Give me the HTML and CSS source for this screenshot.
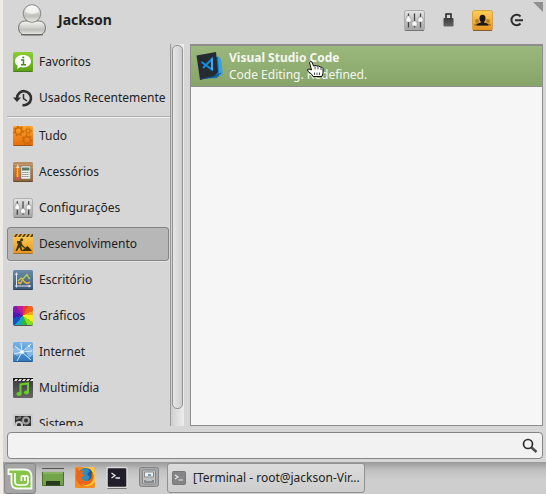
FILE: index.html
```html
<!DOCTYPE html>
<html lang="pt-BR">
<head>
<meta charset="utf-8">
<title>Menu</title>
<link rel="stylesheet" href="styles.css">
</head>
<body>
<svg class="defs" aria-hidden="true">
  <defs>
    <linearGradient id="silver" x1="0" y1="0" x2="0" y2="1"><stop offset="0" stop-color="#e4e4e4"/><stop offset="1" stop-color="#a4a4a4"/></linearGradient>
    <linearGradient id="body" x1="0" y1="0" x2="0" y2="1"><stop offset="0" stop-color="#f7f7f4"/><stop offset=".65" stop-color="#bfc0ba"/><stop offset="1" stop-color="#eeeeeb"/></linearGradient>
    <linearGradient id="green" x1="0" y1="0" x2="0" y2="1"><stop offset="0" stop-color="#8ad02f"/><stop offset="1" stop-color="#5b9f18"/></linearGradient>
    <linearGradient id="orange" x1="0" y1="0" x2="0" y2="1"><stop offset="0" stop-color="#ffa32b"/><stop offset="1" stop-color="#e66b0b"/></linearGradient>
    <linearGradient id="gold" x1="0" y1="0" x2="0" y2="1"><stop offset="0" stop-color="#fccf57"/><stop offset="1" stop-color="#e59322"/></linearGradient>
    <linearGradient id="wood" x1="0" y1="0" x2="0" y2="1"><stop offset="0" stop-color="#ba8f62"/><stop offset="1" stop-color="#8c6540"/></linearGradient>
    <linearGradient id="steel" x1="0" y1="0" x2="0" y2="1"><stop offset="0" stop-color="#6b8aaa"/><stop offset="1" stop-color="#3c5775"/></linearGradient>
    <linearGradient id="sky" x1="0" y1="0" x2="0" y2="1"><stop offset="0" stop-color="#7cb6e8"/><stop offset="1" stop-color="#2b74bd"/></linearGradient>
    <linearGradient id="coal" x1="0" y1="0" x2="0" y2="1"><stop offset="0" stop-color="#3a3a3a"/><stop offset="1" stop-color="#666"/></linearGradient>
    <symbol id="sliders" viewBox="0 0 21 21">
      <rect x=".5" y=".5" width="20" height="20" rx="2" fill="url(#silver)" stroke="#aaa"/><path d="M1 20.500h19" stroke="#777"/>
      <path d="M4.500 3.500v14M10.500 3.500v14M16.500 3.500v14" stroke="#444" stroke-width="1.300"/>
      <path d="M3 6h3v2h1v4H2V8h1zM9 11h3v1h1v4H8v-4h1zM15 7h3v1h1v4h-5V8h1z" fill="#fafafa" stroke="#888" stroke-width=".5"/>
    </symbol>
  </defs>
</svg>
<main class="menu">
  <header class="top">
    <svg class="avatar" viewBox="0 0 28 32" aria-hidden="true">
      <rect x=".7" y="17" width="26.600" height="13.800" rx="6" fill="url(#body)" stroke="#6d6d6b"/>
      <path d="M3 30.800h22" stroke="#555"/>
      <circle cx="14" cy="9.500" r="8.800" fill="url(#body)" stroke="#858582"/>
      <path d="M7.500 8a6.500 6.500 0 0 1 13 0q-6 4-13 0" fill="#fff" opacity=".65"/>
    </svg>
    <h1 class="user">Jackson</h1>
    <nav class="session" aria-label="Sessão">
      <button class="tool" aria-label="Configurações do sistema"><svg class="icon-lg" viewBox="0 0 21 21"><use href="#sliders"/></svg></button>
      <button class="tool" aria-label="Bloquear tela"><svg class="icon-lg" viewBox="0 0 21 21"><path d="M8 9V4h5v5" fill="none" stroke="#222" stroke-width="1.500"/><rect x="5.500" y="8" width="10" height="8.500" rx="1" fill="url(#coal)"/></svg></button>
      <button class="tool" aria-label="Trocar usuário"><svg class="icon-lg" viewBox="0 0 21 21"><rect x=".5" y=".5" width="20" height="20" rx="2" fill="url(#gold)" stroke="#d8a24a"/><path d="M1 20.500h19" stroke="#80602c"/><circle cx="5" cy="11" r="2" fill="#b87f26"/><circle cx="16" cy="11" r="2" fill="#b87f26"/><path d="M2 15.500q0-2 3-2h11q3 0 3 2z" fill="#a26d20"/><ellipse cx="10.500" cy="8.500" rx="3" ry="3.700" fill="#171717"/><path d="M4.500 15.500q0-2 4.500-3v-2h3v2q4.500 1 4.500 3z" fill="#171717"/></svg></button>
      <button class="tool" aria-label="Sair"><svg class="icon-lg" viewBox="0 0 21 21"><path d="M14.500 6.500A5.200 5.200 0 1 0 14.500 13.500M9 10.200h8" fill="none" stroke="#2f2f2f" stroke-width="2"/></svg></button>
    </nav>
    <span class="corner"></span>
  </header>

  <section class="panes">
    <nav class="categories" aria-label="Categorias">
      <button class="item"><svg class="icon" viewBox="0 0 20 20"><rect width="20" height="20" rx="1.500" fill="url(#green)"/><path d="M.5 19.500h19" stroke="#487d1d"/><path d="M10 3c4.700 0 8 2.700 8 6.200s-3.300 6.200-8 6.200q-1.500 0-2.700-.4L4 17l.8-3.200C3 12.700 2 11 2 9.200 2 5.700 5.300 3 10 3z" fill="#fff"/><path d="M8 8h2.500v4.500M8 12.700h5" fill="none" stroke="#4b8c16" stroke-width="1.500"/><circle cx="10.300" cy="5.500" r="1.100" fill="#4b8c16"/></svg><span>Favoritos</span></button>
      <button class="item"><svg class="icon" viewBox="0 0 20 20"><path d="M4 10a7 7 0 1 1 5.500 7" fill="none" stroke="#303030" stroke-width="2.600"/><path d="M0 9.500h8l-4 4.500z" fill="#303030"/><path d="M10.500 6V10.500l3.500 2.500" fill="none" stroke="#303030" stroke-width="1.500"/></svg><span>Usados Recentemente</span></button>
      <hr class="rule">
      <button class="item"><svg class="icon" viewBox="0 0 20 20"><rect width="20" height="20" rx="1.500" fill="url(#orange)"/><g fill="none" stroke="#c96a0d"><circle cx="5.500" cy="5" r="3.300" stroke-width="1.500"/><circle cx="5.500" cy="5" r="4.700" stroke-width="1.500" stroke-dasharray="2 2"/><circle cx="14" cy="14" r="3.300" stroke-width="1.500"/><circle cx="14" cy="14" r="4.700" stroke-width="1.500" stroke-dasharray="2 2"/><circle cx="15" cy="5" r="2"/><circle cx="15" cy="5" r="3.200" stroke-dasharray="1.500 1.500"/></g><path d="M.5 19.500h19" stroke="#a45317"/></svg><span>Tudo</span></button>
      <button class="item"><svg class="icon" viewBox="0 0 20 20"><rect width="20" height="20" rx="1.500" fill="url(#wood)"/><path d="M.5 19.500h19" stroke="#684a2b"/><path d="M0 2.500h20M0 5.500h20" stroke="#cca77e" stroke-width=".5"/><path d="M3 6l1.700-4L6.500 6z" fill="#f3d6a4"/><path d="M3 6h3.500v9H3z" fill="#ee7e17"/><path d="M4 6h1v9H4z" fill="#ffbd4a"/><path d="M3 15h3.500v2.800H3z" fill="#d95757"/><rect x="8" y="4" width="9.500" height="13" rx="1" fill="#f0f0ed" stroke="#85705b" stroke-width=".5"/><path d="M9 5.500h7.500v3H9z" fill="#547a67"/><g stroke="#777" stroke-dasharray="1.300 .8"><path d="M9.300 10.500h7M9.300 12.500h7M9.300 14.500h7"/></g></svg><span>Acessórios</span></button>
      <button class="item"><svg class="icon" viewBox="0 0 20 20"><use href="#sliders"/></svg><span>Configurações</span></button>
      <button class="item selected" aria-current="true"><svg class="icon" viewBox="0 0 20 20"><rect width="20" height="20" rx="1.500" fill="url(#gold)"/><path d="M0 .5h20v2H0z" fill="#e8ae35"/><path d="M1 3l2-3h2L3 3zM5 3l2-3h2L7 3zM9 3l2-3h2l-2 3zM13 3l2-3h2l-2 3zM17 3l2-3h1v2l-.7 1z" fill="#493b17"/><circle cx="8.700" cy="5.700" r="1.500" fill="#3e3210"/><path d="M4 7.500l4-1 1.500 4.500 2 2-1 .7-2.500-2.200 1.500 5.500H8l-1.500-4L4 17H2.500l2.300-6 .7-2.700-1.500 2z" fill="#3e3210"/><path d="M8.500 17l4-3.500 1.800-1.500 2 1.800L19 17z" fill="#3e3210"/><path d="M4 7l8 7" stroke="#3e3210"/><path d="M.5 19.500h19" stroke="#9d752b"/></svg><span>Desenvolvimento</span></button>
      <button class="item"><svg class="icon" viewBox="0 0 20 20"><rect width="20" height="20" rx="1.500" fill="url(#steel)"/><path d="M3.500 17.500V3M2 16h15" stroke="#dce5ef"/><path d="M2 5l1.500-3L5 5zM15.500 14.500l3 1.500-3 1.500z" fill="#dce5ef"/><path d="M5 11l3-3 2 1 4-4.500 1.500 3L17 9" fill="none" stroke="#aad34a" stroke-width="1.400"/><path d="M5 12.500l2.500 1 2-4 2.500 3 2 1 3-1.500" fill="none" stroke="#edb52f" stroke-width="1.400"/><path d="M.5 19.500h19" stroke="#2d435c"/></svg><span>Escritório</span></button>
      <button class="item"><span class="icon wheel"></span><span>Gráficos</span></button>
      <button class="item"><svg class="icon" viewBox="0 0 20 20"><rect width="20" height="20" rx="1.500" fill="url(#sky)"/><path d="M0 6l4-1 5 3-1 4-4 2-4-3zM12 7l5-2 3 2v6l-4 3-2-4z" fill="#b2d7f5" opacity=".55"/><path d="M2 4l7 6 9-8M9 10l-5 9M9 10l9 8M9 10l-1-9M9 10l10-1M1 12l8-2" fill="none" stroke="#e8f5ff" stroke-width=".9"/><circle cx="9" cy="10" r="1.800" fill="#fff"/><circle cx="16" cy="4" r="1" fill="#fff"/><path d="M.5 19.500h19" stroke="#285b8e"/></svg><span>Internet</span></button>
      <button class="item"><svg class="icon" viewBox="0 0 20 20"><rect width="20" height="20" rx="1.500" fill="url(#coal)"/><path d="M0 0h20v3H0z" fill="#171717"/><path d="M1 3l1.500-2H5L3.500 3zM5 3l1.500-2H9L7.500 3zM9 3l1.500-2H13L11.500 3zM13 3l1.500-2H17L15.500 3zM17 3l1.500-2H20v2z" fill="#eee"/><path d="M7.500 16V6.500l7.500-1V14" fill="none" stroke="#67ce29" stroke-width="2"/><ellipse cx="6" cy="16" rx="2.600" ry="2" fill="#67ce29"/><ellipse cx="13.500" cy="14.500" rx="2.600" ry="2" fill="#67ce29"/></svg><span>Multimídia</span></button>
      <button class="item"><svg class="icon" viewBox="0 0 20 20"><rect width="20" height="20" rx="1.500" fill="#cacaca"/><rect x="2" y="2" width="16" height="17" fill="#303030"/><circle cx="13" cy="6.500" r="3" fill="none" stroke="#a3a3a3" stroke-width="2"/><circle cx="13" cy="6.500" r="4" fill="none" stroke="#777" stroke-dasharray="1.500 1.500"/><circle cx="6" cy="11" r="3" fill="none" stroke="#c4c4c4" stroke-width="2"/><path d="M3 5l5-2M11 12l5 2" stroke="#777" stroke-width="2"/></svg><span>Sistema</span></button>
    </nav>
    <div class="track"><div class="thumb"></div></div>
    <div class="apps">
      <button class="app">
        <svg class="app-icon" viewBox="0 0 28 30" aria-hidden="true"><path d="M18 5l4 1 3 17-4 4-16 1z" fill="#1372b7"/><path d="M22 5l3 3 2 15-4 3z" fill="#36a1e3"/><path d="M.5 4.500L20 1l2 20-4 4.500L4 29z" fill="#252b30"/><path d="M5.500 11L16 18.500V8L7 17" fill="none" stroke="#168bdd" stroke-width="2"/><path d="M16 7.500v11.500" stroke="#3ba9ed" stroke-width="2"/><path d="M5 28l15-3 5-3" fill="none" stroke="#174f78"/></svg>
        <span class="copy"><strong>Visual Studio Code</strong><span>Code Editing. Redefined.</span></span>
        <svg class="pointer" viewBox="0 0 17 17" aria-hidden="true"><path d="M2.500 1.500q1-1.500 2.500-.5l1.500 4 2.500-.5 1 .7 2-.2 1 1 2 .3 1 1.200v4.500L15 15.500H6L4.500 13 1 10.500 .5 8.500Q2 7.500 4.500 9z" fill="#fff" stroke="#111"/><path d="M8 5.500V8.500M11 6V8.500M14 7V9M7.500 11.500v2.500M10 11.500v2.500M12.500 11.500v2.500" stroke="#222" stroke-width=".8"/></svg>
      </button>
    </div>
  </section>

  <form class="search">
    <input class="query" type="text" aria-label="Pesquisar">
    <button class="find" type="button" aria-label="Buscar"><svg viewBox="0 0 16 16"><circle cx="6" cy="6" r="4.500" fill="none" stroke="#2c2c2c" stroke-width="1.700"/><path d="M9 9l5.500 5" stroke="#4d4d4d" stroke-width="2.500"/></svg></button>
  </form>
</main>

<footer class="panel">
  <button class="launch mint" aria-label="Menu"><svg viewBox="0 0 26 24"><path d="M1.500 2.500h16q7 0 7 7V21.500H10.500q-6 0-6-6V7h-3z" fill="#86c54a" stroke="#f6fbf1" stroke-width="1.800"/><path d="M8 6v8.500q0 3.500 3.500 3.500h6q3.500 0 3.500-3.500V10.500q0-1.700-1.600-1.700t-1.600 1.700V14M17.800 10.500q0-1.700-1.700-1.700t-1.700 1.700V14" fill="none" stroke="#fff" stroke-width="1.700"/></svg></button>
  <button class="launch" aria-label="Mostrar área de trabalho"><svg viewBox="0 0 26 24"><path d="M2.500 3.500h21v16h-21z" fill="#72a44b" stroke="#4b7133"/><path d="M2 3h22v3H2z" fill="#b9bab8"/><path d="M2 2.500h22" stroke="#555"/><path d="M6 15h14v4.500H6z" fill="#263a1b"/><path d="M3 7h20" stroke="#9dc17e"/></svg></button>
  <button class="launch" aria-label="Firefox"><svg viewBox="0 0 26 24"><rect x="3" y="1" width="20" height="21" rx="1.500" fill="#f28b20"/><path d="M10 1h12.500v8L19 4z" fill="#ffc44f"/><circle cx="14" cy="10.500" r="8.300" fill="#185c94"/><path d="M9 4q5-4 9 1l-3 3 3 3-3 5-4-1-3-5z" fill="#328dbe"/><path d="M4 2l4 3 4-.5-2 3 3 2-3.500 2q2 5 7 3 4-2 3-7l2-2q4 8-3 13-7 4-12-1-4-5-2-10z" fill="#e9661b"/><path d="M19 4q5 6 1 12-4 5-11 2 7 5 13-1 4-6 0-13z" fill="#ffcb36"/></svg></button>
  <button class="launch" aria-label="Terminal"><svg viewBox="0 0 26 24"><rect x="3" y="1.500" width="20" height="20" rx="1.500" fill="#211d2a" stroke="#dadada" stroke-width="1.500"/><path d="M3.500 22.500h19" stroke="#777"/><path d="M7.500 7l3.500 2.500L7.500 12M11.500 12H16" fill="none" stroke="#eee" stroke-width="1.300"/></svg></button>
  <button class="launch" aria-label="Arquivos"><svg viewBox="0 0 26 24"><rect x="3.500" y="1.500" width="19" height="19" rx="2" fill="#a5a7a9" stroke="#858585"/><rect x="6.500" y="4" width="13" height="14" rx="1" fill="#bfc1c3" stroke="#888"/><path d="M8.500 6h9v5h-9z" fill="#eee" stroke="#888"/><path d="M12 8h3v2h-3z" fill="#7798b4"/><path d="M9 14v2h8v-2" fill="none" stroke="#75787b" stroke-width="1.500"/></svg></button>
  <button class="task"><svg viewBox="0 0 14 14" aria-hidden="true"><rect x=".5" y=".5" width="13" height="13" rx="1" fill="#858588" stroke="#777"/><path d="M3 4l3 2-3 2M6.500 9H11" fill="none" stroke="#e9e9e9" stroke-width="1.200"/></svg><span>[Terminal - root@jackson-Vir...</span></button>
</footer>
</body>
</html>
```
FILE: styles.css
```css
* { box-sizing: border-box; }

body {
  display: flex;
  flex-direction: column;
  height: 100vh;
  margin: 0;
  border-left: 3px solid #efebe7;
  overflow: hidden;
  background: #d6d6d6;
  color: #222;
  font: 12px/18px "Noto Sans", sans-serif;
}

button {
  margin: 0;
  padding: 0;
  border: 0;
  background: none;
  color: inherit;
  font: inherit;
  text-align: left;
}

svg { display: block; flex: none; }

.defs { position: absolute; width: 0; height: 0; }

.menu {
  display: flex;
  flex: 1;
  flex-direction: column;
  min-height: 0;
  padding: 0 3px 3px 4px;
}

.top {
  position: relative;
  display: flex;
  align-items: center;
  height: 44px;
  flex: none;
  padding: 0 16px 4px 11px;
}

.avatar { width: 28px; height: 32px; }

.user {
  flex: 1;
  margin: 0 0 0 12px;
  font-size: 14px;
  line-height: 20px;
}

.session { display: flex; gap: 13px; }

.icon-lg { width: 21px; height: 21px; }

.corner {
  position: absolute;
  top: 2px;
  right: 0;
  border-top: 10px solid #909090;
  border-left: 10px solid transparent;
}

.panes { display: flex; flex: 1; min-height: 0; }

.categories {
  display: flex;
  flex: none;
  flex-direction: column;
  width: 163px;
  overflow: hidden;
}

.item {
  display: flex;
  flex: none;
  align-items: center;
  gap: 6px;
  height: 34px;
  margin: 1px 1px 1px 0;
  padding: 0 0 0 5px;
  border: 1px solid transparent;
  border-radius: 3px;
  white-space: nowrap;
}

.item.selected {
  border-color: #858585;
  background: #b7b7b7;
  box-shadow: 0 1px #e6e6e6;
}

.icon { width: 20px; height: 20px; flex: none; }

.wheel {
  border-radius: 2px;
  border-bottom: 1px solid #555;
  background: conic-gradient(#e9353b 0 30deg, #ef641b 30deg 65deg, #f4a51a 65deg 90deg, #f1ef17 90deg 125deg, #88df20 125deg 155deg, #28b83b 155deg 185deg, #19a5bc 185deg 220deg, #194cc8 220deg 255deg, #4d1aaf 255deg 290deg, #7c1ab1 290deg 325deg, #c31c91 325deg);
}

.rule {
  flex: none;
  width: 100%;
  height: 2px;
  margin: 0;
  border: 0;
  border-top: 1px solid #b0b0b0;
  background: #eee;
}

.track {
  width: 14px;
  flex: none;
  padding: 1px 1px 17px;
  border-left: 1px solid #999;
  background: linear-gradient(90deg, #cfcfcf, #ededed);
}

.thumb {
  height: 100%;
  border: 1px solid #929292;
  border-radius: 5px;
  background: linear-gradient(90deg, #e6e6e6, #cecece);
}

.apps {
  flex: 1;
  min-width: 0;
  margin-left: 6px;
  border: 1px solid #8d8d8d;
  border-top-width: 2px;
  background: #f6f6f6;
}

.app {
  position: relative;
  display: flex;
  align-items: center;
  gap: 5px;
  width: 100%;
  height: 41px;
  padding-left: 5px;
  border-bottom: 1px solid #8d8d8d;
  background: linear-gradient(#9bb87d, #87a567);
  color: #f5f7f1;
}

.app-icon { width: 28px; height: 30px; }

.copy { display: flex; flex-direction: column; line-height: 17px; }

.pointer {
  position: absolute;
  top: 15px;
  left: 116px;
  width: 17px;
  height: 17px;
}

.search {
  display: flex;
  flex: none;
  align-items: center;
  height: 27px;
  margin-top: 6px;
  padding-right: 4px;
  border: 1px solid #858585;
  border-radius: 4px;
  background: #f2f2f2;
}

.query {
  flex: 1;
  min-width: 0;
  height: 100%;
  padding: 0 8px;
  border: 0;
  outline: 0;
  background: none;
  font: inherit;
}

.find svg { width: 16px; height: 16px; }

.panel {
  display: flex;
  flex: none;
  height: 32px;
  background: linear-gradient(#999, #c0c0c0 8px, #cecece 18px);
}

.launch {
  display: flex;
  align-items: center;
  justify-content: center;
  width: 32px;
  height: 32px;
}

.launch svg { width: 26px; height: 24px; }

.mint {
  height: 31px;
  margin: 1px 1px 0;
  border: 1px solid #858585;
  border-radius: 3px;
  background: #a5a5a5;
}

.task {
  display: flex;
  align-items: center;
  gap: 7px;
  width: 198px;
  height: 30px;
  margin: 1px 0 0 2px;
  padding: 0 3px 0 4px;
  border: 1px solid #929292;
  border-radius: 3px;
  background: linear-gradient(#dcdcdc, #cdcdcd);
  white-space: nowrap;
}

.task svg { width: 14px; height: 14px; }
```
